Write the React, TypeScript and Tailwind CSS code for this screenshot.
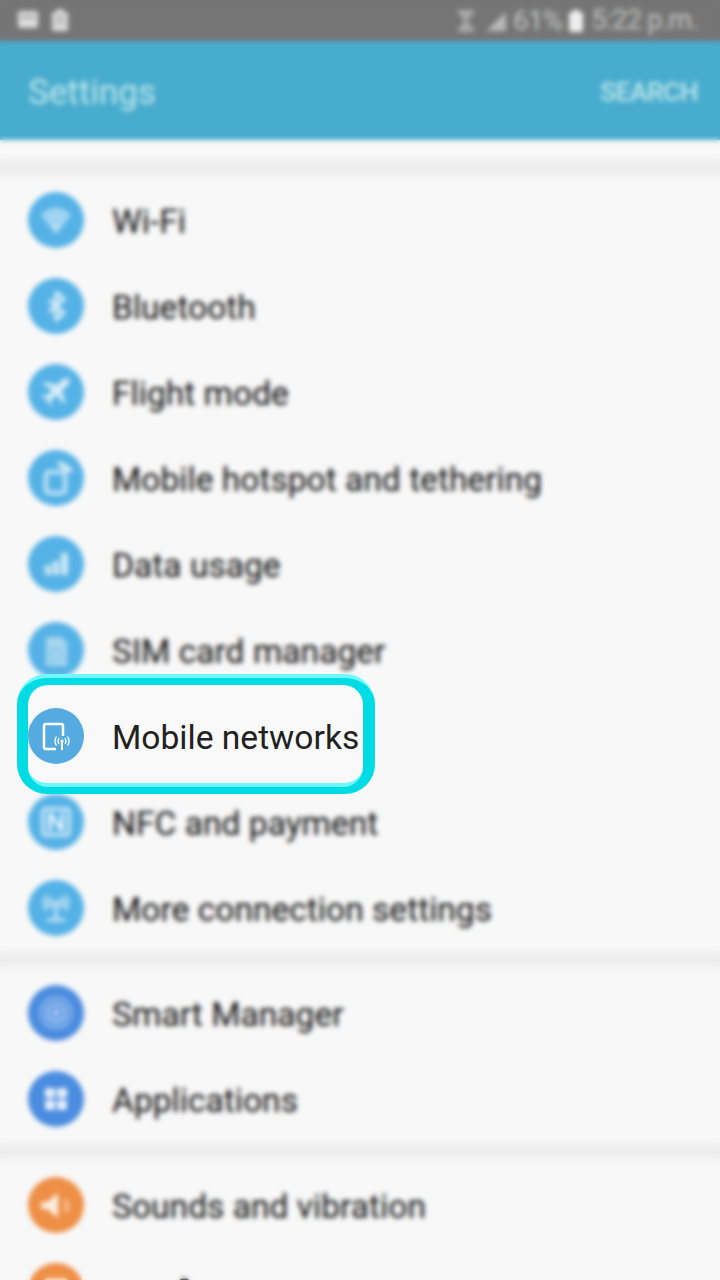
import React from "react";

const roboto = { fontFamily: "Roboto, 'Liberation Sans', sans-serif" };

type IconProps = { className?: string };

const Svg = ({ children }: { children: React.ReactNode }) => (
  <svg viewBox="0 0 56 56" className="w-14 h-14 block" fill="none">{children}</svg>
);
const P = "#d8ecf7";

const icons: Record<string, React.ReactNode> = {
  wifi: (
    <Svg>
      <path d="M13 23 Q28 9 43 23 L28 42 Z" fill="#b5def4" />
      <path d="M17 26 Q28 16 39 26 M21 31 Q28 25 35 31" stroke="#6fbeea" strokeWidth="2" />
    </Svg>
  ),
  bt: (
    <Svg>
      <path d="M28 14 L28 42 L36 35 L21 22 M28 14 L36 21 L21 34" stroke={P} strokeWidth="3.5" strokeLinejoin="round" />
    </Svg>
  ),
  flight: (
    <Svg>
      <path d="M41 15 C38 13 35 15 33 17 L29 21 L17 18 L15 20 L24 26 L19 32 L15 31 L14 33 L19 36 L22 41 L24 40 L23 36 L29 31 L35 40 L37 38 L34 26 L39 22 C41 20 43 17 41 15 Z" fill={P} />
    </Svg>
  ),
  hotspot: (
    <Svg>
      <rect x="18" y="22" width="19" height="21" rx="3" stroke={P} strokeWidth="3.5" />
      <path d="M30 11 Q40 13 46 22 L36 22 L34 17 L30 17 Z" fill={P} />
    </Svg>
  ),
  data: (
    <Svg>
      <rect x="17" y="29" width="6" height="10" fill="#cfe8f6" />
      <rect x="25" y="25" width="6" height="14" fill="#cfe8f6" />
      <rect x="33" y="17" width="7" height="22" fill="#cfe8f6" />
    </Svg>
  ),
  sim: (
    <Svg>
      <path d="M20 15 L33 15 L39 20 L39 44 L18 44 L18 17 Z" fill="#a9d6f0" />
      <rect x="23" y="27" width="10" height="11" stroke="#7cc1e9" strokeWidth="2" />
    </Svg>
  ),
  nfc: (
    <Svg>
      <rect x="15" y="15" width="26" height="26" rx="2" stroke="#e4f2fa" strokeWidth="3" />
      <path d="M22 37 L22 19 M34 37 L34 19" stroke="#f2f9fd" strokeWidth="3.5" />
      <path d="M22 19 L34 37" stroke="#e4f2fa" strokeWidth="3.5" />
    </Svg>
  ),
  more: (
    <Svg>
      <path d="M19 16 Q14 23 19 30 M37 16 Q42 23 37 30 M23.5 18 Q20.5 23 23.5 28 M32.5 18 Q35.5 23 32.5 28" stroke="#e4f2fa" strokeWidth="2.5" />
      <path d="M28 23 L28 40 M19 40 L37 40" stroke="#e4f2fa" strokeWidth="2.5" />
      <circle cx="28" cy="23" r="2.5" fill="#e4f2fa" />
    </Svg>
  ),
  smart: (
    <Svg>
      <circle cx="28" cy="28" r="15" stroke="#8db8ec" strokeWidth="3" />
      <circle cx="28" cy="28" r="9" stroke="#b4d0f3" strokeWidth="3" />
      <circle cx="28" cy="28" r="3" stroke="#c4daf6" strokeWidth="2.5" />
    </Svg>
  ),
  apps: (
    <Svg>
      <rect x="17" y="17" width="10" height="10" rx="2" fill="#e9f1fb" />
      <rect x="29" y="17" width="10" height="10" rx="2" fill="#e9f1fb" />
      <rect x="17" y="29" width="10" height="10" rx="2" fill="#e9f1fb" />
      <rect x="29" y="29" width="10" height="10" rx="2" fill="#e9f1fb" />
    </Svg>
  ),
  sound: (
    <Svg>
      <path d="M13 25 L19 25 L30 16 L30 41 L19 32 L13 32 Z" fill="#fdeee2" />
      <rect x="36" y="22" width="5" height="14" rx="2.5" fill="#f5bb8c" />
    </Svg>
  ),
  notif: (
    <Svg>
      <rect x="16" y="15" width="24" height="20" rx="3" fill="#fbe6d5" />
    </Svg>
  ),
};

const Row = ({ icon, label, color }: { icon: string; label: string; color: string }) => (
  <div className="h-[86px] flex items-center pl-7">
    <div className={`w-14 h-14 rounded-full shrink-0 ${color}`}>{icons[icon]}</div>
    <span className="ml-7 mt-[4px] text-[33.6px] leading-none text-[#0c0c0c] whitespace-nowrap">{label}</span>
  </div>
);

const Gap = ({ className }: IconProps) => <div className={`bg-[#eeeeee] ${className}`} />;

export default function App() {
  return (
    <div className="relative w-[720px] h-[1280px] overflow-hidden bg-[#f8f8f8]" style={roboto}>
      <div className="h-[41px] bg-[#757575] flex items-center pl-[17px] pr-[22px] text-[#d6d6d6]">
        <svg width="52" height="24" viewBox="0 0 52 24" fill="#dcdcdc" className="-mt-[1px]">
          <rect x="1" y="3" width="20" height="17" rx="2" />
          <rect x="4" y="8" width="14" height="2" fill="#8a8a8a" />
          <rect x="40" y="1" width="6" height="3" />
          <rect x="35" y="4" width="16" height="19" rx="2" />
          <rect x="38" y="8" width="10" height="2" fill="#a0a0a0" />
          <rect x="38" y="13" width="10" height="2" fill="#a0a0a0" />
        </svg>
        <div className="ml-auto flex items-center">
          <svg width="18" height="26" viewBox="0 0 18 26" fill="#a9a9a9">
            <path d="M1 2 L17 2 L17 5 L11 12 L11 14 L17 21 L17 24 L1 24 L1 21 L7 14 L7 12 L1 5 Z" />
          </svg>
          <svg width="22" height="22" viewBox="0 0 22 22" fill="#b8b8b8" className="ml-[10px]">
            <path d="M21 2 L21 21 L1 21 Z" />
          </svg>
          <span className="ml-[6px] text-[28px] leading-none tracking-[-0.8px] text-[#c4c4c4]">61%</span>
          <svg width="16" height="24" viewBox="0 0 16 24" fill="#eeeeee" className="ml-[5px]">
            <rect x="5" y="1" width="6" height="3" />
            <rect x="1" y="3" width="14" height="20" rx="2" />
          </svg>
          <span className="ml-2 text-[27px] leading-none tracking-[-0.6px] text-[#c4c4c4]">5:22 p.m.</span>
        </div>
      </div>
      <div className="h-[99px] bg-[#48acce] flex items-center justify-between pl-7 pr-[22px]">
        <span className="text-[35px] leading-none text-[#bfe6ea] mt-[4px]">Settings</span>
        <span className="text-[26.4px] leading-none font-medium tracking-[-0.5px] text-[#bfe6ea] mt-[3px]">SEARCH</span>
      </div>
      <div className="h-[19px]" />
      <Gap className="h-[17px]" />
      <div className="pt-[1px]">
        <Row icon="wifi" label="Wi-Fi" color="bg-[#55b2e6]" />
        <Row icon="bt" label="Bluetooth" color="bg-[#55b2e6]" />
        <Row icon="flight" label="Flight mode" color="bg-[#55b2e6]" />
        <Row icon="hotspot" label="Mobile hotspot and tethering" color="bg-[#55b2e6]" />
        <Row icon="data" label="Data usage" color="bg-[#55b2e6]" />
        <Row icon="sim" label="SIM card manager" color="bg-[#55b2e6]" />
        <Row icon="hotspot" label="Mobile networks" color="bg-[#55b2e6]" />
        <Row icon="nfc" label="NFC and payment" color="bg-[#55b2e6]" />
        <Row icon="more" label="More connection settings" color="bg-[#55b2e6]" />
      </div>
      <Gap className="h-[16px]" />
      <div className="pt-[3px]">
        <Row icon="smart" label="Smart Manager" color="bg-[#4a8cdf]" />
        <Row icon="apps" label="Applications" color="bg-[#4a8cdf]" />
      </div>
      <Gap className="h-[16px] mt-[1px]" />
      <div className="pt-[3px]">
        <Row icon="sound" label="Sounds and vibration" color="bg-[#ee8f45]" />
        <Row icon="notif" label="Notifications" color="bg-[#ee8f45]" />
      </div>

      <div className="absolute inset-0 backdrop-blur-[2.5px]" />

      <div className="absolute left-[17px] top-[674px] w-[358px] h-[120px] rounded-[30px] bg-[#00dbe4] border-t-4 border-[#6ff8ff] pt-[7px] pb-[7px] pl-[11px] pr-[12px]">
        <div className="h-full rounded-[20px] bg-[#f9f9f9] border-b-4 border-[#6ff8ff] flex items-center pt-[4px]">
          <div className="w-14 h-14 rounded-full shrink-0 bg-[#55abe0]">
            <Svg>
              <rect x="16" y="16" width="19" height="25" rx="2" stroke="#ffffff" strokeWidth="2.5" />
              <rect x="28" y="28" width="14" height="15" fill="#55abe0" />
              <path d="M34 33 L34 42" stroke="#ffffff" strokeWidth="2" />
              <circle cx="34" cy="33" r="1.6" fill="#ffffff" />
              <path d="M31 30 Q29 33 31 36 M37 30 Q39 33 37 36 M28.5 28.5 Q25.5 33 28.5 37.5 M39.5 28.5 Q42.5 33 39.5 37.5" stroke="#ffffff" strokeWidth="1.3" />
            </Svg>
          </div>
          <span className="ml-7 mt-[3px] text-[33.6px] leading-none text-[#212121] whitespace-nowrap">Mobile networks</span>
        </div>
      </div>
    </div>
  );
}
